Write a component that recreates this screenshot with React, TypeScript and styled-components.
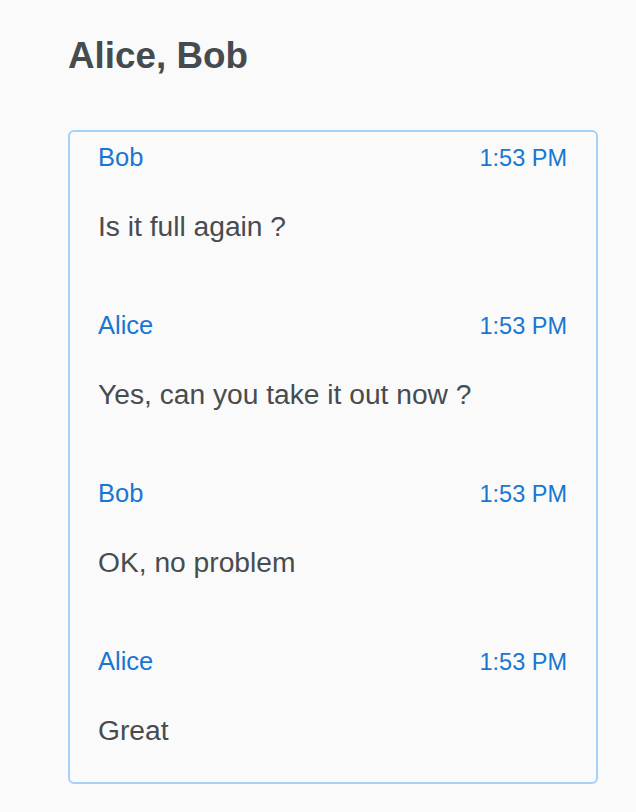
import React from "react";
import styled, { createGlobalStyle } from "styled-components";

const GlobalStyle = createGlobalStyle`
  html, body {
    margin: 0;
    padding: 0;
    background: #fafafa;
  }
  body {
    font-family: "Liberation Sans", Arial, Helvetica, sans-serif;
  }
`;

const Page = styled.div`
  min-height: 812px;
  box-sizing: border-box;
  padding: 35px 38px 0 68px;
  background: #fafafa;
`;

const Title = styled.h1`
  margin: 0 0 53px;
  font-size: 36.8px;
  line-height: 42px;
  font-weight: 700;
  color: #454b4e;
`;

const Thread = styled.div`
  display: flex;
  flex-direction: column;
  gap: 69px;
  padding: 11px 29px 36px 28px;
  border: 2px solid #a5d0f8;
  border-radius: 6px;
`;

const Message = styled.div`
  display: flex;
  flex-direction: column;
  gap: 39px;
`;

const Header = styled.div`
  display: flex;
  justify-content: space-between;
  align-items: baseline;
  height: 28px;
  line-height: 28px;
  color: #1976d2;
`;

const Sender = styled.span`
  font-size: 25.5px;
`;

const Time = styled.span`
  font-size: 23.5px;
`;

const Body = styled.div`
  height: 32px;
  font-size: 28.2px;
  line-height: 32px;
  color: #474c4f;
`;

const messages = [
  { from: "Bob", time: "1:53 PM", text: "Is it full again ?" },
  { from: "Alice", time: "1:53 PM", text: "Yes, can you take it out now ?" },
  { from: "Bob", time: "1:53 PM", text: "OK, no problem" },
  { from: "Alice", time: "1:53 PM", text: "Great" },
];

export default function App() {
  return (
    <>
      <GlobalStyle />
      <Page>
        <Title>Alice, Bob</Title>
        <Thread>
          {messages.map((m, i) => (
            <Message key={i}>
              <Header>
                <Sender>{m.from}</Sender>
                <Time>{m.time}</Time>
              </Header>
              <Body>{m.text}</Body>
            </Message>
          ))}
        </Thread>
      </Page>
    </>
  );
}
